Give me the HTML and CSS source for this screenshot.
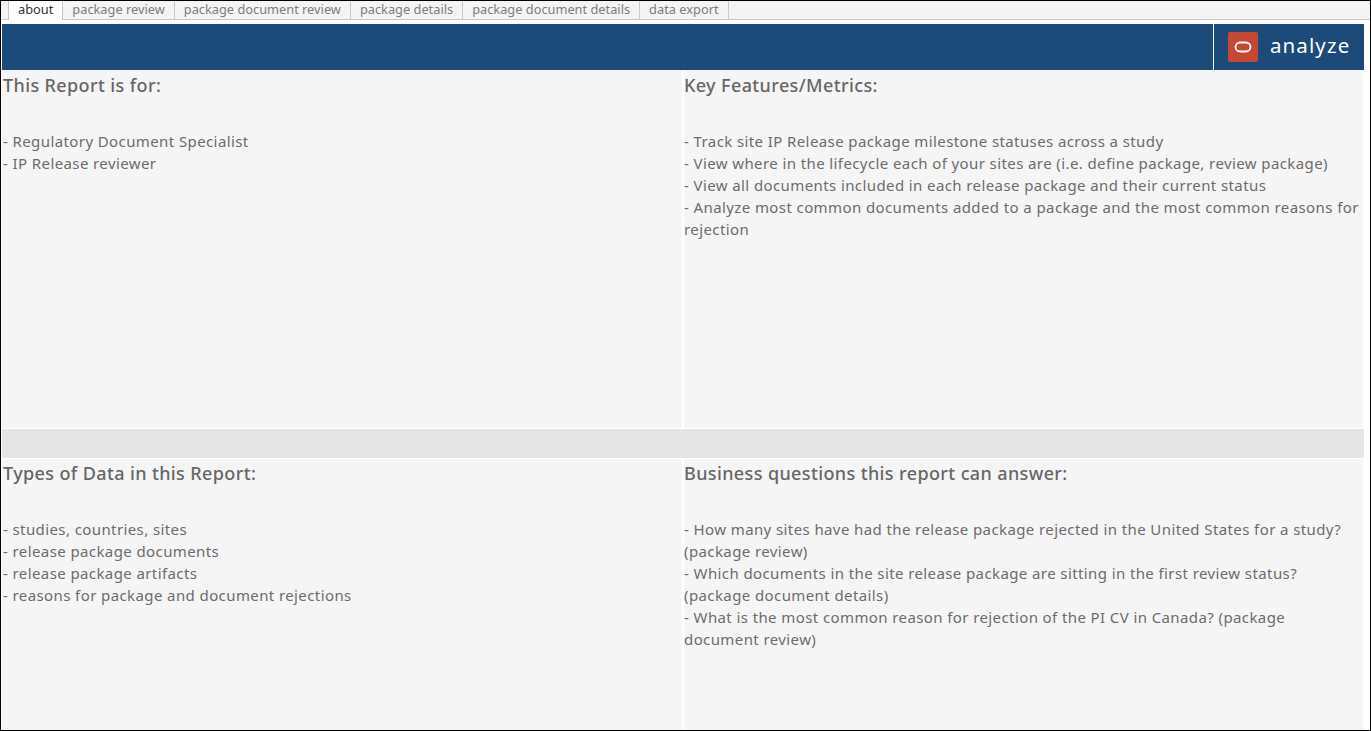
FILE: index.html
```html
<!DOCTYPE html>
<html lang="en">
<head>
    <meta charset="UTF-8">
    <title>about</title>
    <link rel="stylesheet" href="styles.css">
</head>
<body>
<div class="frame">
    <div class="tabs">
        <div class="tab active">about</div>
        <div class="tab">package review</div>
        <div class="tab">package document review</div>
        <div class="tab">package details</div>
        <div class="tab">package document details</div>
        <div class="tab">data export</div>
    </div>
    <div class="dash">
        <div class="banner">
            <div class="logo">
                <span class="logo-box">
                    <svg width="30" height="30" viewBox="0 0 30 30"><rect x="7.5" y="10.5" width="15" height="9" rx="4.5" fill="none" stroke="#fff" stroke-width="1.8"/></svg>
                </span>
                <span class="logo-text">analyze</span>
            </div>
        </div>
        <div class="row row-top">
            <div class="cell">
                <div class="heading">This Report is for:</div>
                <div class="lines">
                    - Regulatory Document Specialist<br>
                    - IP Release reviewer
                </div>
            </div>
            <div class="cell cell-right">
                <div class="heading">Key Features/Metrics:</div>
                <div class="lines">
                    - Track site IP Release package milestone statuses across a study<br>
                    - View where in the lifecycle each of your sites are (i.e. define package, review package)<br>
                    - View all documents included in each release package and their current status<br>
                    - Analyze most common documents added to a package and the most common reasons for rejection
                </div>
            </div>
        </div>
        <div class="divider"></div>
        <div class="row row-bottom">
            <div class="cell">
                <div class="heading">Types of Data in this Report:</div>
                <div class="lines">
                    - studies, countries, sites<br>
                    - release package documents<br>
                    - release package artifacts<br>
                    - reasons for package and document rejections
                </div>
            </div>
            <div class="cell cell-right">
                <div class="heading">Business questions this report can answer:</div>
                <div class="lines">
                    - How many sites have had the release package rejected in the United States for a study? (package review)<br>
                    - Which documents in the site release package are sitting in the first review status? (package document details)<br>
                    - What is the most common reason for rejection of the PI CV in Canada? (package document review)
                </div>
            </div>
        </div>
    </div>
</div>
</body>
</html>
```
FILE: styles.css
```css
*{
    margin: 0;
    padding: 0;
    box-sizing: border-box;
}
body{
    background-color: #fff;
    font-family: "Noto Sans", "Open Sans", sans-serif;
    overflow: hidden;
}
.frame{
    width: 1371px;
    height: 731px;
    border: 1px solid #000;
    display: flex;
    flex-direction: column;
}
.tabs{
    display: flex;
    height: 19px;
    padding-left: 7px;
    background-color: #f4f4f4;
    border-bottom: 1px solid #c8c8c8;
    flex: none;
}
.tab{
    height: 18px;
    padding: 0 9px;
    font-size: 12.8px;
    line-height: 16px;
    color: #7c7c7c;
    border-right: 1px solid #c8c8c8;
    white-space: nowrap;
}
.tab.active{
    height: 19px;
    background-color: #fff;
    color: #333;
    border-left: 1px solid #c8c8c8;
}
.dash{
    flex: 1;
    display: flex;
    flex-direction: column;
    padding: 4px 6px 0 1px;
    min-height: 0;
}
.banner{
    height: 46px;
    background-color: #1c4a79;
    display: flex;
    justify-content: flex-end;
    flex: none;
}
.logo{
    width: 151px;
    border-left: 1px solid #fff;
    display: flex;
    align-items: center;
    padding-left: 14px;
}
.logo-box{
    width: 30px;
    height: 30px;
    background-color: #c74634;
    border-radius: 2px;
    display: block;
}
.logo-box svg{
    display: block;
}
.logo-text{
    margin-left: 12px;
    margin-top: -5px;
    font-size: 20.5px;
    letter-spacing: 1.1px;
    color: #fff;
}
.row{
    display: flex;
    gap: 2px;
    flex: none;
}
.row-top{
    height: 358px;
}
.row-bottom{
    height: 271px;
}
.row-bottom .cell{
    padding-top: 1px;
}
.cell{
    width: 680px;
    background-color: #f5f5f5;
    padding: 2px 1px;
    color: #6c6c6c;
}
.cell-right{
    flex: 1;
    margin-right: 1px;
    padding-left: 0;
    padding-right: 2px;
}
.heading{
    font-size: 18px;
    line-height: 26px;
    font-weight: 500;
    letter-spacing: .38px;
    color: #666;
}
.lines{
    margin-top: 32px;
    font-size: 15px;
    line-height: 22px;
    letter-spacing: .4px;
}
.divider{
    height: 29px;
    margin: 1px 0;
    background-color: #e5e5e5;
    flex: none;
}
```
